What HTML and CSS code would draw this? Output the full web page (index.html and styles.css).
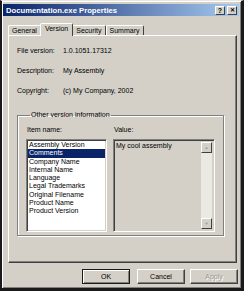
FILE: index.html
```html
<!DOCTYPE html>
<html lang="en">
<head>
  <meta charset="UTF-8">
  <title>Documentation.exe Properties</title>
  <link rel="stylesheet" href="styles.css">
</head>
<body>
  <div class="window">
    <div class="titlebar">
      <span class="title">Documentation.exe Properties</span>
      <span class="tbtn">?</span>
      <span class="tbtn close">&#x2715;</span>
    </div>

    <div class="tabs">
      <span class="tab">General</span>
      <span class="tab active">Version</span>
      <span class="tab">Security</span>
      <span class="tab">Summary</span>
    </div>

    <div class="panel">
      <div class="row"><span class="label">File version:</span><span>1.0.1051.17312</span></div>
      <div class="row"><span class="label">Description:</span><span>My Assembly</span></div>
      <div class="row"><span class="label">Copyright:</span><span>(c) My Company, 2002</span></div>

      <fieldset class="group">
        <legend>Other version information</legend>
        <div class="cols">
          <div>
            <div class="caption">Item name:</div>
            <ul class="list">
              <li>Assembly Version</li>
              <li class="sel">Comments</li>
              <li>Company Name</li>
              <li>Internal Name</li>
              <li>Language</li>
              <li>Legal Trademarks</li>
              <li>Original Filename</li>
              <li>Product Name</li>
              <li>Product Version</li>
            </ul>
          </div>
          <div>
            <div class="caption">Value:</div>
            <div class="value">
              <div class="value-text">My cool assembly</div>
              <div class="scroll">
                <span class="sbtn">&#9650;</span>
                <span class="track"></span>
                <span class="sbtn">&#9660;</span>
              </div>
            </div>
          </div>
        </div>
      </fieldset>
    </div>

    <div class="buttons">
      <button class="default">OK</button>
      <button>Cancel</button>
      <button class="disabled">Apply</button>
    </div>
  </div>
</body>
</html>
```

FILE: styles.css
```css
* {
  box-sizing: border-box;
}
body {
  margin: 0;
  background: #d4d0c8;
  font-family: 'Liberation Sans', Arial, sans-serif;
  font-size: 7px;
  color: #000;
}
.window {
  width: 244px;
  height: 291px;
  background: #d4d0c8;
  border-top: 1px solid #e8e6e1;
  border-left: 2px solid #1a1a1a;
  border-right: 3px solid #1a1a1a;
  border-bottom: 3px solid #1a1a1a;
  box-shadow: inset 1px 1px #fff, inset -1px -1px #808080;
  display: flex;
  flex-direction: column;
}
.titlebar {
  margin: 3px 2px 0 1px;
  height: 12px;
  background: linear-gradient(to right, #0a246a, #a6caf0);
  display: flex;
  align-items: center;
  padding: 0 2px 0 3px;
  gap: 2px;
}
.title {
  flex: 1;
  color: #fff;
  font-weight: bold;
  font-size: 7.7px;
}
.tbtn {
  width: 10px;
  height: 9px;
  background: #d4d0c8;
  border: 1px solid;
  border-color: #fff #404040 #404040 #fff;
  font-weight: bold;
  font-size: 7px;
  line-height: 7px;
  text-align: center;
}
.close {
  font-size: 6px;
}
.tabs {
  display: flex;
  align-items: flex-end;
  height: 19px;
  padding-left: 6px;
}
.tab {
  height: 10px;
  line-height: 9px;
  padding: 0 3px;
  border: 1px solid;
  border-bottom: none;
  border-color: #fff #404040 transparent #fff;
  border-radius: 2px 2px 0 0;
}
.tab.active {
  height: 13px;
  line-height: 10px;
  margin: 0 -1px -1px;
  padding: 0 4px;
  background: #d4d0c8;
  position: relative;
  z-index: 1;
}
.panel {
  height: 228px;
  margin: 0 4px 0 6px;
  border: 1px solid;
  border-color: #fff #404040 #404040 #fff;
  box-shadow: inset -1px -1px #808080;
  padding: 5px 0 0 8px;
}
.row {
  height: 20px;
  line-height: 20px;
  display: flex;
}
.label {
  width: 46px;
}
.group {
  margin: 10px 0 0 0;
  width: 207px;
  height: 125px;
  border: 1px solid #808080;
  box-shadow: inset 1px 1px #fff, 1px 1px #fff;
  padding: 0 0 0 8px;
}
.group legend {
  padding: 0 1px;
  margin-left: 4px;
  line-height: 8px;
}
.cols {
  display: grid;
  grid-template-columns: 81px 102px;
  column-gap: 6px;
  margin-top: 7px;
}
.caption {
  padding-left: 1px;
  line-height: 8px;
  margin-bottom: 5px;
}
.list {
  list-style: none;
  margin: 0;
  height: 93px;
  background: #fff;
  color: #000;
  border: 1px solid;
  border-color: #808080 #fff #fff #808080;
  box-shadow: inset 1px 1px #404040, inset -1px -1px #d4d0c8;
  padding: 1px 1px 0;
}
.list li {
  height: 8.25px;
  line-height: 8.25px;
  padding-left: 1px;
  color: #000;
}
.list li.sel {
  background: #0a246a;
  color: #fff;
}
.value {
  height: 93px;
  border: 1px solid;
  border-color: #808080 #fff #fff #808080;
  box-shadow: inset 1px 1px #404040, inset -1px -1px #d4d0c8;
  display: flex;
  padding: 2px;
}
.value-text {
  flex: 1;
  line-height: 8px;
}
.scroll {
  width: 11px;
  display: flex;
  flex-direction: column;
  background: #ebe9e4;
}
.track {
  flex: 1;
}
.sbtn {
  height: 11px;
  background: #d4d0c8;
  border: 1px solid;
  border-color: #fff #404040 #404040 #fff;
  color: #9a968e;
  font-size: 4px;
  line-height: 9px;
  text-align: center;
}
.buttons {
  display: flex;
  justify-content: flex-end;
  gap: 5px;
  margin: 6px 3px 0 0;
}
button {
  width: 48px;
  height: 15px;
  padding: 0;
  background: #d4d0c8;
  font-family: 'Liberation Sans', Arial, sans-serif;
  font-size: 7px;
  color: #000;
  border: 1px solid;
  border-color: #fff #404040 #404040 #fff;
  box-shadow: inset -1px -1px #808080;
}
button.default {
  border-color: #1a1a1a;
  box-shadow: inset 1px 1px #fff, inset -1px -1px #808080;
  margin-right: 2px;
}
button.disabled {
  color: #9a968e;
  text-shadow: 1px 1px #fff;
}
```
